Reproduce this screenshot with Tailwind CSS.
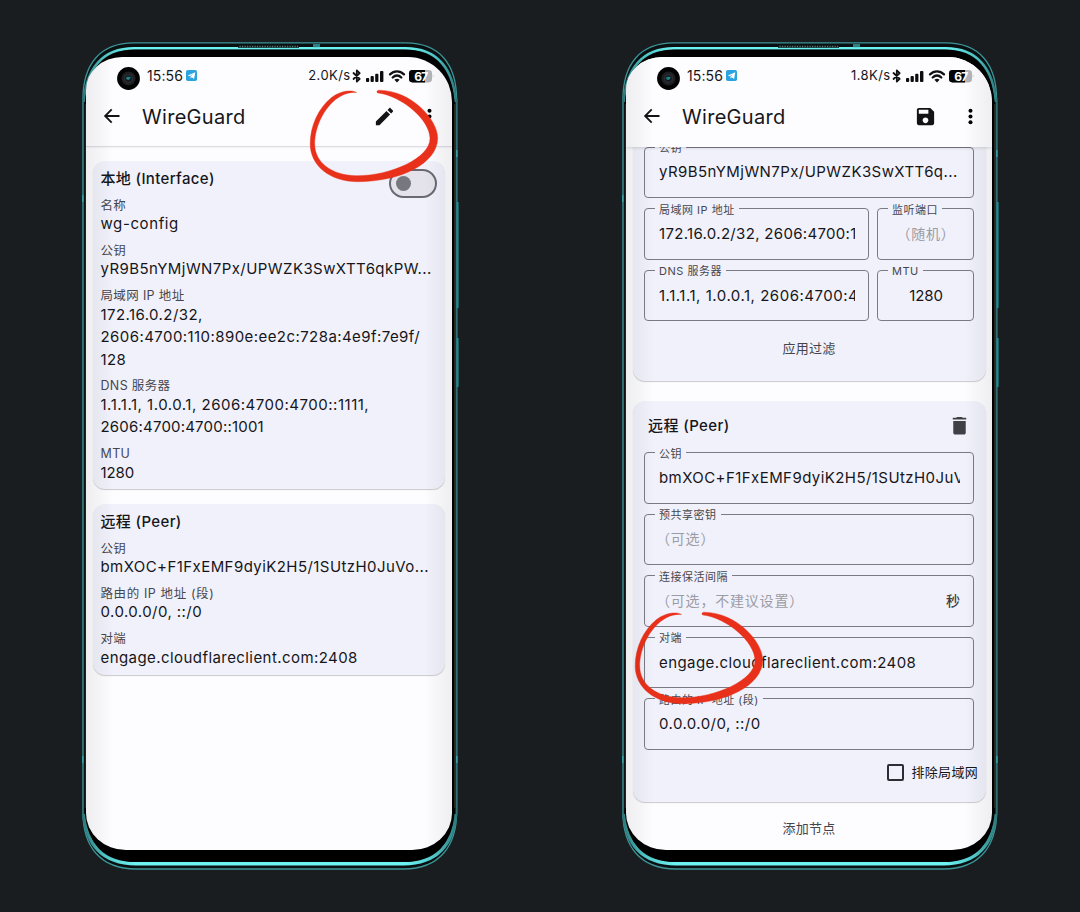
<!DOCTYPE html>
<html lang="zh-CN">
<head>
<meta charset="utf-8">
<title>WireGuard</title>
<script src="https://cdn.jsdelivr.net/npm/@tailwindcss/browser@4"></script>
</head>
<body class="relative h-[912px] w-[1080px] overflow-hidden bg-[#191d20] font-['Inter','Noto_Sans_CJK_SC',sans-serif] text-[#16161a]">

<!-- shared drawings -->
<svg class="absolute size-0">
  <defs>
    <linearGradient id="glow" gradientUnits="userSpaceOnUse" x1="0" x2="376" y1="0" y2="0">
      <stop offset="0" stop-color="#2a7578"/><stop offset=".06" stop-color="#4fc4c5"/><stop offset=".14" stop-color="#6df3f2"/>
      <stop offset=".86" stop-color="#6df3f2"/><stop offset=".94" stop-color="#4fc4c5"/><stop offset="1" stop-color="#2a7578"/>
    </linearGradient>
  </defs>
  <symbol id="frame" viewBox="0 0 380 830">
    <path d="M.9 58C.9 22 18 .9 52 .9H323.500C357.500 .9 374.600 22 374.600 58V770C374.600 804 357.500 827 321.500 827H54C18 827 .9 804 .9 770z" fill="#0a0f11" stroke="#3c9496" stroke-width="1.300"/>
    <path d="M1.800 60C4 27 20 6.300 52 6.300H323.500C355.500 6.300 371.500 27 373.700 60" fill="none" stroke="url(#glow)" stroke-width="2.600"/>
    <path d="M1.800 772C4 802 20 821.800 54 821.800H321.500C355.500 821.800 371.500 802 373.700 772" fill="none" stroke="url(#glow)" stroke-width="3.400"/>
    <path d="M2.800 62C5 29 21 7.800 53 7.800H322.500C354.500 7.800 370.500 29 372.700 62V770C370.500 800 354.500 819.800 320.500 819.800H55C21 819.800 5 800 2.800 770z" fill="#000"/>
    <path d="M372.600 62V766M3.300 62V766" stroke="#3b3433" stroke-width=".8"/>
    <path d="M.9 56V772M374.600 56V772" stroke="#2f7074" stroke-width="1.800"/>
    <rect x="156" y="2.800" width="61" height="3" fill="#0b1516"/>
    <path d="M157.500 4.500H216" stroke="#55797a" stroke-width="1.400" stroke-dasharray="1.200 1.300"/>
    <path d="M231 2h7v3.200h-7z" fill="#2f8083"/>
    <path d="M375.600 160V266M375.600 296V345" stroke="#1c8c92" stroke-width="2"/>
    <path d="M.7 153v7M.7 714v7M374.800 108v7M374.800 714v7" stroke="#35a0a3" stroke-width="1.600"/>
  </symbol>
  <symbol id="camera" viewBox="0 0 23 23">
    <circle cx="11.500" cy="11.500" r="11.400" fill="#020202"/><circle cx="11.500" cy="11.500" r="7" fill="#1d1f22"/>
    <circle cx="11.500" cy="11.500" r="4.600" fill="#2c2f33"/><circle cx="11.500" cy="11.500" r="3.300" fill="#12181b"/>
    <path d="M8.800 11c1.200-1.600 4-1.700 5.200-.2-1 .3-1.500 2.200-2.800 2.200-1 0-1.800-1-2.400-2z" fill="#217f86"/>
  </symbol>
  <symbol id="tg" viewBox="0 0 11 11">
    <rect width="11" height="11" rx="1.800" fill="#2aa3de"/>
    <path d="M1.800 5.500 9.300 2.200 8.100 8.900 5.700 7.300 4.500 8.500V6.600L7.300 4 3.700 6.200z" fill="#fff"/>
  </symbol>
  <symbol id="status" viewBox="0 0 82 14">
    <path d="M1.500 4 7.700 9.900 4.800 12.600V1.400L7.700 4.100 1.500 10" fill="none" stroke="#111" stroke-width="1.800" stroke-linejoin="round" stroke-linecap="round"/>
    <g fill="#0c0c0e"><rect x="14" y="9" width="3.200" height="4" rx=".9"/><rect x="18.600" y="7" width="3.200" height="6" rx=".9"/><rect x="23.200" y="4.800" width="3.200" height="8.200" rx=".9"/><rect x="28" y="2" width="3.400" height="11" rx=".9"/></g>
    <g fill="none" stroke="#111" stroke-width="2.300" stroke-linecap="round"><path d="M38 5.400C42 1.300 48 1.300 52 5.400M40.700 8.500C43.300 5.800 46.700 5.800 49.300 8.500"/></g>
    <path d="M42.400 10.700c1.400-1.300 3.800-1.300 5.200 0L45 13.400z" fill="#111"/>
    <rect x="57" y="1" width="23" height="12.400" rx="3.300" fill="#b4b4bb"/>
    <path d="M60.300 1H73V13.400H60.300A3.300 3.300 0 0 1 57 10.100V4.300A3.300 3.300 0 0 1 60.300 1z" fill="#050506"/>
    <path d="M80.800 5.600v3.200c.9-.4.900-2.800 0-3.200z" fill="#b4b4bb"/>
    <text x="62.300" y="11.500" fill="#fff" font-family="Inter" font-weight="700" font-size="12" letter-spacing="-.9">67</text>
  </symbol>
  <symbol id="back" viewBox="0 0 18 18"><path d="M16.500 9H2.200M8.700 2.400 2.100 9l6.600 6.600" fill="none" stroke="#131316" stroke-width="1.800"/></symbol>
  <symbol id="more" viewBox="0 0 24 24"><circle cx="12" cy="6" r="2.100"/><circle cx="12" cy="12" r="2.100"/><circle cx="12" cy="18" r="2.100"/></symbol>
  <symbol id="ring" viewBox="0 0 130 94">
    <path d="M47.500 3.500C44 .8 32 1 22.500 8.500 9.500 19 1 37 1.200 55.500 1.500 76 20 92.700 49 92.700 91 92.500 128.500 75 128.700 49 128.800 31 103 1.500 70 1.200 67.500 1.300 67.500 3.500 69 4 93 7 121 31 121 49.500 121 69 82 86.700 48 86.700 22 86.500 5.700 73 5.700 55 5.700 36 17 15 32 6.900 38 3.700 43 3.200 47.500 3.500z" fill="#e8301a" stroke="#e8301a" stroke-width=".4"/>
  </symbol>
</svg>

<main class="flex gap-[164px] pl-[82px] pt-[42px]">

  <!-- tunnel details -->
  <section class="relative h-[830px] w-[376px] pl-[4px] pt-[14.5px]">
    <svg class="absolute left-0 top-0 h-[830px] w-[380px]"><use href="#frame"/></svg>
    <div class="relative flex h-[793px] w-[366px] flex-col overflow-hidden rounded-[36px_44px_40px_40px/33px_45px_37px_37px] bg-[#fdfcff]">
      <header class="border-b border-[#dcdbe3] pb-[9px] shadow-[0_1px_2px_#0000000d]">
        <div class="-mt-px flex h-10 items-center pl-[31px] pr-[18px]">
          <svg class="mt-[5px] size-[23px]"><use href="#camera"/></svg>
          <span class="ml-[7px] text-[14px] tracking-[0.1px]">15:56</span>
          <svg class="ml-[3px] size-[11px]"><use href="#tg"/></svg>
          <span class="ml-auto text-[13px] tracking-[0.4px]">2.0K/s</span>
          <svg class="ml-[1.500px] h-[14px] w-[82px]"><use href="#status"/></svg>
        </div>
        <div class="flex h-[41px] items-center pl-[17px] pr-[11px]">
          <svg class="size-[18px]"><use href="#back"/></svg>
          <h1 class="ml-[21px] pt-[1px] text-[20px] tracking-[0.300px]">WireGuard</h1>
          <svg class="ml-auto size-[23px]" viewBox="0 0 24 24"><path d="M3 17.250V21h3.750L17.810 9.940l-3.750-3.750L3 17.250zM20.710 7.040c.39-.39.39-1.020 0-1.410l-2.340-2.340c-.39-.39-1.020-.39-1.410 0l-1.830 1.830 3.750 3.750 1.830-1.830z" fill="#131316"/></svg>
          <svg class="ml-[22px] size-[23px]"><use href="#more"/></svg>
        </div>
      </header>

      <div class="flex flex-col gap-[15px] pl-[6.500px] pr-[7px] pt-[14px]">
        <article class="h-[328px] rounded-[12px] bg-[#f1f1fb] px-2 pt-[7.500px] shadow-[0_1px_1px_#00000033]">
          <div class="mb-[7.500px] flex h-[22px] items-start justify-between">
            <h2 class="text-[15px]/[22px] font-medium tracking-[0.35px]">本地 (Interface)</h2>
            <div class="mt-[0.500px] flex h-[29px] w-[48px] shrink-0 items-center rounded-full border-2 border-[#696a72] bg-[#e4e3eb] pl-[5px]"><span class="size-[15px] rounded-full bg-[#77777f]"></span></div>
          </div>
          <dl class="text-[15px]/[22.500px] tracking-[0.43px] [&_dd]:relative [&_dd]:top-[0.300px] [&_dd]:whitespace-nowrap [&_dd]:pb-[7.200px] [&_dt]:text-[12.500px]/[15.500px] [&_dt]:tracking-[0.350px] [&_dt]:text-[#46474e]">
            <dt>名称</dt><dd class="tracking-[0.600px]">wg-config</dd>
            <dt>公钥</dt><dd>yR9B5nYMjWN7Px/UPWZK3SwXTT6qkPW...</dd>
            <dt>局域网 IP 地址</dt><dd>172.16.0.2/32,<br>2606:4700:110:890e:ee2c:728a:4e9f:7e9f/<br>128</dd>
            <dt>DNS 服务器</dt><dd><span class="tracking-[0.510px]">1.1.1.1, 1.0.0.1, 2606:4700:4700::1111,</span><br><span class="tracking-[0.200px]">2606:4700:4700::1001</span></dd>
            <dt>MTU</dt><dd class="tracking-[-0.100px]">1280</dd>
          </dl>
        </article>

        <article class="h-[171px] rounded-[12px] bg-[#f1f1fb] px-2 pt-[7.500px] shadow-[0_1px_1px_#00000033]">
          <h2 class="mb-[7.500px] text-[15px]/[22px] font-medium tracking-[0.350px]">远程 (Peer)</h2>
          <dl class="text-[15px]/[22.500px] tracking-[0.430px] [&_dd]:relative [&_dd]:top-[0.300px] [&_dd]:whitespace-nowrap [&_dd]:pb-[7.200px] [&_dt]:text-[12.500px]/[15.500px] [&_dt]:tracking-[0.350px] [&_dt]:text-[#46474e]">
            <dt>公钥</dt><dd>bmXOC+F1FxEMF9dyiK2H5/1SUtzH0JuVo...</dd>
            <dt class="!tracking-[0.600px]">路由的 IP 地址 (段)</dt><dd>0.0.0.0/0, ::/0</dd>
            <dt>对端</dt><dd>engage.cloudflareclient.com:2408</dd>
          </dl>
        </article>
      </div>
      <div class="pointer-events-none absolute inset-0 bg-[linear-gradient(90deg,#0000000f,#00000008_14px,transparent_28px,transparent_338px,#00000008_352px,#0000000f)]"></div>
    </div>
  </section>

  <!-- tunnel editor -->
  <section class="relative h-[830px] w-[376px] pl-[4px] pt-[14.500px]">
    <svg class="absolute left-0 top-0 h-[830px] w-[380px]"><use href="#frame"/></svg>
    <div class="relative flex h-[793px] w-[366px] flex-col overflow-hidden rounded-[36px_44px_40px_40px/33px_45px_37px_37px] bg-[#fdfcff]">
      <header class="z-10 h-[90px] shrink-0 bg-[#fdfcff] shadow-[0_1px_3px_#00000026]">
        <div class="-mt-px flex h-10 items-center pl-[31px] pr-[18px]">
          <svg class="mt-[5px] size-[23px]"><use href="#camera"/></svg>
          <span class="ml-[7px] text-[14px] tracking-[0.1px]">15:56</span>
          <svg class="ml-[3px] size-[11px]"><use href="#tg"/></svg>
          <span class="ml-auto text-[13px] tracking-[0.4px]">1.8K/s</span>
          <svg class="ml-[1.500px] h-[14px] w-[82px]"><use href="#status"/></svg>
        </div>
        <div class="flex h-[41px] items-center pl-[17px] pr-[10.500px]">
          <svg class="size-[18px]"><use href="#back"/></svg>
          <h1 class="ml-[21px] pt-[1px] text-[20px] tracking-[0.300px]">WireGuard</h1>
          <svg class="ml-auto size-[23px]" viewBox="0 0 24 24"><path d="M17 3H5c-1.110 0-2 .9-2 2v14c0 1.100.890 2 2 2h14c1.100 0 2-.9 2-2V7l-4-4zm-5 16c-1.660 0-3-1.340-3-3s1.340-3 3-3 3 1.340 3 3-1.340 3-3 3zm3-10H5V5h10v4z" fill="#131316"/></svg>
          <svg class="ml-[22px] size-[23px]"><use href="#more"/></svg>
        </div>
      </header>

      <div class="flex flex-1 flex-col overflow-hidden pl-[6.500px] pr-[6.500px] text-[15px]/[22px] tracking-[0.430px] [&_fieldset]:mb-[1.600px] [&_fieldset]:h-[60px] [&_fieldset]:min-w-0 [&_fieldset]:rounded-[4px] [&_fieldset]:border [&_fieldset]:border-[#7a7b85] [&_fieldset]:pl-[14px] [&_fieldset]:pr-[13px] [&_legend]:-ml-[4px] [&_legend]:px-[4px] [&_legend]:pt-[3px] [&_legend]:text-[11px]/[15px] [&_legend]:tracking-[0.500px] [&_legend]:text-[#46474e] [&_p]:mt-[5.400px] [&_p]:overflow-hidden [&_p]:whitespace-nowrap">
        <article class="-mt-[20.500px] h-[254.500px] shrink-0 rounded-[12px] bg-[#f1f1fb] px-[11.500px] pt-[12px] shadow-[0_1px_1px_#00000033]">
          <fieldset><legend>公钥</legend><p>yR9B5nYMjWN7Px/UPWZK3SwXTT6q...</p></fieldset>
          <div class="grid grid-cols-[225px_1fr] gap-x-2">
            <fieldset><legend>局域网 IP 地址</legend><p class="tracking-[0.320px]">172.16.0.2/32, 2606:4700:110:890e</p></fieldset>
            <fieldset><legend>监听端口</legend><p class="-mx-3 text-center text-[14px] tracking-[0.800px] text-[#9c9ca4]">（随机）</p></fieldset>
            <fieldset><legend>DNS 服务器</legend><p class="tracking-[0.520px]">1.1.1.1, 1.0.0.1, 2606:4700:4700::1111</p></fieldset>
            <fieldset><legend>MTU</legend><p class="text-center tracking-[-0.100px]">1280</p></fieldset>
          </div>
          <div class="flex h-[50px] items-center justify-center text-[13px] tracking-[0.300px] text-[#44454c]">应用过滤</div>
        </article>

        <article class="mt-[20px] h-[401px] shrink-0 rounded-[12px] bg-[#f1f1fb] px-[11.500px] pt-[6.500px] shadow-[0_1px_1px_#00000033]">
          <div class="flex h-[36.500px] items-center justify-between pl-[4px] pr-[3px]">
            <h2 class="pt-[1px] font-medium tracking-[0.400px]">远程 (Peer)</h2>
            <svg class="size-[23px]" viewBox="0 0 24 24"><path d="M5.500 7.200V19.500c0 1.100.9 2 2 2h9c1.100 0 2-.9 2-2V7.200zM19 4h-3.500l-1-1h-5l-1 1H5v1.700h14V4z" fill="#3f4046"/></svg>
          </div>
          <fieldset><legend>公钥</legend><p>bmXOC+F1FxEMF9dyiK2H5/1SUtzH0JuVo</p></fieldset>
          <fieldset><legend>预共享密钥</legend><p class="-ml-[3px] text-[14px] tracking-[0.800px] text-[#9c9ca4]">（可选）</p></fieldset>
          <fieldset><legend>连接保活间隔</legend><p class="-ml-[3px] flex justify-between text-[14px] tracking-[0.800px] text-[#9c9ca4]"><span>（可选，不建议设置）</span><span class="font-medium tracking-normal text-[#3c3d43]">秒</span></p></fieldset>
          <fieldset><legend>对端</legend><p>engage.cloudflareclient.com:2408</p></fieldset>
          <fieldset><legend>路由的 IP 地址 (段)</legend><p>0.0.0.0/0, ::/0</p></fieldset>
          <label class="-mr-[4px] flex h-[42px] items-center justify-end gap-[7px] text-[13px] tracking-[0.300px]"><span class="size-[17px] rounded-[2px] border-2 border-[#2d2e34]"></span>排除局域网</label>
        </article>

        <div class="flex h-[52px] shrink-0 items-center justify-center text-[13px] tracking-[0.300px] text-[#44454c]">添加节点</div>
      </div>
      <div class="pointer-events-none absolute inset-0 z-20 bg-[linear-gradient(90deg,#0000000f,#00000008_14px,transparent_28px,transparent_338px,#00000008_352px,#0000000f)]"></div>
    </div>
  </section>
</main>

<!-- hand-drawn highlight rings -->
<svg class="absolute left-[309px] top-[89px] h-[94px] w-[130px]"><use href="#ring"/></svg>
<svg class="absolute left-[634px] top-[610.500px] h-[94px] w-[130px]"><use href="#ring"/></svg>
</body>
</html>
